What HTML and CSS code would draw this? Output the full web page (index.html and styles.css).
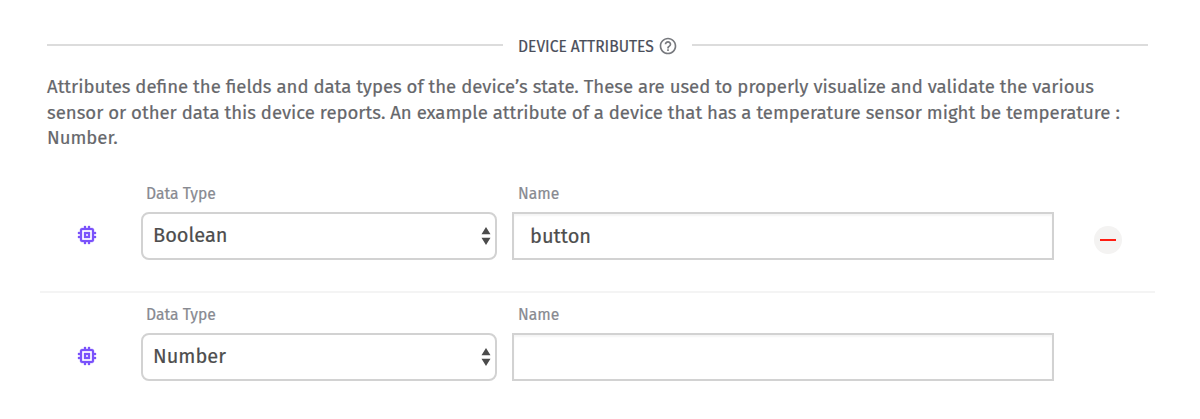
FILE: index.html
```html
<!DOCTYPE html>
<html lang="en">
<head>
<meta charset="utf-8">
<title>Device Attributes</title>
<link rel="stylesheet" href="styles.css">
</head>
<body>
<svg class="symbols" aria-hidden="true">
  <symbol id="chip" viewBox="0 0 24 24"><path d="M15 9H9v6h6V9zm-2 4h-2v-2h2v2zm8-2V9h-2V7c0-1.1-.9-2-2-2h-2V3h-2v2h-2V3H9v2H7c-1.1 0-2 .9-2 2v2H3v2h2v2H3v2h2v2c0 1.1.9 2 2 2h2v2h2v-2h2v2h2v-2h2c1.1 0 2-.9 2-2v-2h2v-2h-2v-2h2zm-4 6H7V7h10v10z"/></symbol>
  <symbol id="arrows" viewBox="0 0 9 18"><path d="M4.5 0L9 7.2H0zM4.5 18L0 10.8h9z"/></symbol>
</svg>
<main class="panel">
  <header class="heading">
    <h2 class="title">DEVICE ATTRIBUTES</h2>
    <svg class="help" viewBox="0 0 24 24"><path d="M11 18h2v-2h-2v2zm1-16C6.48 2 2 6.48 2 12s4.48 10 10 10 10-4.480 10-10S17.520 2 12 2zm0 18c-4.410 0-8-3.590-8-8s3.590-8 8-8 8 3.590 8 8-3.590 8-8 8zm0-14c-2.210 0-4 1.790-4 4h2c0-1.100.9-2 2-2s2 .9 2 2c0 2-3 1.750-3 5h2c0-2.250 3-2.500 3-5 0-2.210-1.790-4-4-4z"/></svg>
  </header>
  <p class="intro">
    <span class="line">Attributes define the fields and data types of the device’s state. These are used to properly visualize and validate the various</span>
    <span class="line">sensor or other data this device reports. An example attribute of a device that has a temperature sensor might be temperature :</span>
    <span class="line">Number.</span>
  </p>
  <section class="row">
    <svg class="chip"><use href="#chip"/></svg>
    <div class="field type">
      <span class="label">Data Type</span>
      <div class="select"><span class="value">Boolean</span><svg class="arrows"><use href="#arrows"/></svg></div>
    </div>
    <div class="field name">
      <span class="label">Name</span>
      <div class="input"><span class="value">button</span></div>
    </div>
    <div class="remove"><span class="minus"></span></div>
  </section>
  <section class="row">
    <svg class="chip"><use href="#chip"/></svg>
    <div class="field type">
      <span class="label">Data Type</span>
      <div class="select"><span class="value">Number</span><svg class="arrows"><use href="#arrows"/></svg></div>
    </div>
    <div class="field name">
      <span class="label">Name</span>
      <div class="input"></div>
    </div>
  </section>
</main>
</body>
</html>
```
FILE: styles.css
```css
* { box-sizing: border-box; }
body { margin: 0; background: #fff; font-family: "Fira Sans", "Noto Sans", sans-serif; font-weight: 400; -webkit-text-stroke: 0.2px currentColor; overflow: hidden; }
.symbols { display: none; }
.panel { height: 419px; padding: 34px 45px 0 40px; }
.heading { display: flex; align-items: center; height: 24px; padding: 0 7px; }
.heading::before, .heading::after { content: ""; height: 2px; background: #dcdcdc; }
.heading::before { width: 456px; margin: -2px 15px 0 0; }
.heading::after { flex: 1; margin: -2px 0 0 14px; }
.title { margin: 0; padding-top: 1px; width: 136px; font-size: 15.6px; font-weight: 400; line-height: 24px; color: #4a4e5a; white-space: nowrap; }
.help { width: 20px; height: 20px; margin-left: 4px; fill: #77797e; }
.intro { margin: 17px 7px 0; font-size: 18.56px; line-height: 25.5px; color: #66676b; }
.line { display: block; white-space: nowrap; }
.row { display: flex; height: 121px; padding-left: 35px; }
.intro + .row { height: 143px; margin-top: -2px; padding-top: 22px; border-bottom: 2px solid #f4f4f4; }
.chip { width: 24px; height: 24px; margin-top: 51px; fill: #7a52fb; stroke: #7a52fb; stroke-width: 0.3px; }
.field { display: flex; flex-direction: column; }
.type { width: 356px; margin-left: 42px; }
.name { width: 542px; margin-left: 15px; }
.label { height: 40px; padding: 10px 0 0 5px; font-size: 15.7px; line-height: 24px; color: #888a91; }
.name .label { padding-left: 6px; }
.select, .input { display: flex; height: 48px; border: 2px solid #d2d2d2; background: #fff; }
.select { align-items: center; justify-content: space-between; padding: 0 4px 2px 10px; border-radius: 8px; }
.input { align-items: center; padding-left: 16px; box-shadow: inset 0 2px 2px #f5f5f5; }
.value { font-size: 20px; line-height: 28px; color: #4d4d4d; }
.arrows { width: 10px; height: 18px; margin-top: 2px; fill: #4b4b4b; }
.remove { display: flex; align-items: center; justify-content: center; width: 28px; height: 28px; margin: 54px 0 0 40px; border-radius: 50%; background: #f4f3f2; }
.minus { width: 16px; height: 2px; background: #ff1d12; }
```
